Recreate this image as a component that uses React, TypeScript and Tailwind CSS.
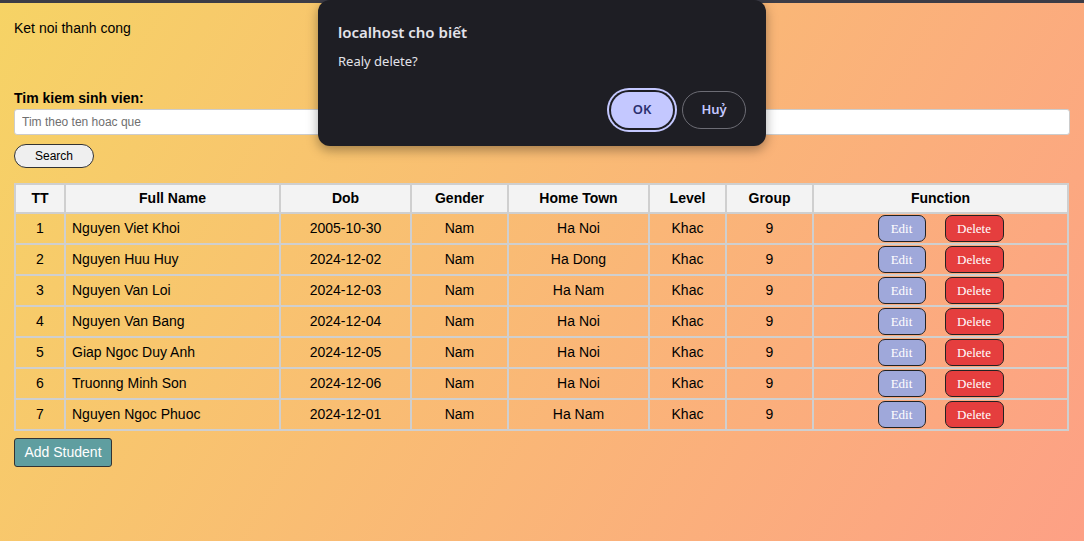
import React from 'react';

type Student = {
  id: number;
  name: string;
  dob: string;
  gender: string;
  town: string;
  level: string;
  group: string;
};

const students: Student[] = [
  { id: 1, name: 'Nguyen Viet Khoi', dob: '2005-10-30', gender: 'Nam', town: 'Ha Noi', level: 'Khac', group: '9' },
  { id: 2, name: 'Nguyen Huu Huy', dob: '2024-12-02', gender: 'Nam', town: 'Ha Dong', level: 'Khac', group: '9' },
  { id: 3, name: 'Nguyen Van Loi', dob: '2024-12-03', gender: 'Nam', town: 'Ha Nam', level: 'Khac', group: '9' },
  { id: 4, name: 'Nguyen Van Bang', dob: '2024-12-04', gender: 'Nam', town: 'Ha Noi', level: 'Khac', group: '9' },
  { id: 5, name: 'Giap Ngoc Duy Anh', dob: '2024-12-05', gender: 'Nam', town: 'Ha Noi', level: 'Khac', group: '9' },
  { id: 6, name: 'Truonng Minh Son', dob: '2024-12-06', gender: 'Nam', town: 'Ha Noi', level: 'Khac', group: '9' },
  { id: 7, name: 'Nguyen Ngoc Phuoc', dob: '2024-12-01', gender: 'Nam', town: 'Ha Nam', level: 'Khac', group: '9' },
];

const th = 'border-2 border-[#cfcfcf] bg-[#f3f3f3] h-[29px] p-0 text-[14px] font-bold text-black';
const td = 'border-2 border-[#cfcfcf] h-[31px] p-0 text-[14px] text-black text-center';

export default function App() {
  return (
    <div className="relative min-h-screen bg-[linear-gradient(120deg,#f6d365_0%,#fda085_100%)] font-['Liberation_Sans',Arial,sans-serif] overflow-hidden">
      {/* thanh toi phia tren */}
      <div className="h-[3px] bg-[#3c3c46]" />

      <div className="px-[14px]">
        <p className="pt-[17px] text-[14px] leading-[16px] text-black">Ket noi thanh cong</p>

        {/* tim kiem */}
        <div className="mt-[54px]">
          <label className="block text-[14px] leading-[16px] font-bold text-black">Tim kiem sinh vien:</label>
          <input
            type="text"
            placeholder="Tim theo ten hoac que"
            className="mt-[3px] block w-full h-[26px] px-[7px] bg-white border border-[#cccccc] rounded-[3px] text-[12px] placeholder:text-[#6f6f6f] outline-none"
          />
          <button className="mt-[9px] w-[80px] h-[24px] rounded-full border border-[#333] bg-[#efefef] text-[12px] text-black">
            Search
          </button>
        </div>

        {/* bang sinh vien */}
        <table className="mt-[15px] w-[1055px] table-fixed border-collapse border-2 border-[#cfcfcf]">
          <colgroup>
            <col className="w-[50px]" />
            <col className="w-[215px]" />
            <col className="w-[131px]" />
            <col className="w-[97px]" />
            <col className="w-[141px]" />
            <col className="w-[77px]" />
            <col className="w-[87px]" />
            <col />
          </colgroup>
          <thead>
            <tr>
              <th className={th}>TT</th>
              <th className={th}>Full Name</th>
              <th className={th}>Dob</th>
              <th className={th}>Gender</th>
              <th className={th}>Home Town</th>
              <th className={th}>Level</th>
              <th className={th}>Group</th>
              <th className={th}>Function</th>
            </tr>
          </thead>
          <tbody>
            {students.map((s) => (
              <tr key={s.id}>
                <td className={td}>{s.id}</td>
                <td className="border-2 border-[#cfcfcf] h-[31px] p-0 pl-[6px] text-[14px] text-black text-left">{s.name}</td>
                <td className={td}>{s.dob}</td>
                <td className={td}>{s.gender}</td>
                <td className={td}>{s.town}</td>
                <td className={td}>{s.level}</td>
                <td className={td}>{s.group}</td>
                <td className={td}>
                  <div className="flex justify-center gap-[19px] font-['Liberation_Serif',serif]">
                    <button className="w-[48px] h-[27px] rounded-[7px] border border-[#222] bg-[#9fa8da] text-[13px] text-white">
                      Edit
                    </button>
                    <button className="w-[59px] h-[27px] rounded-[7px] border border-[#222] bg-[#e53e3e] text-[13px] text-white">
                      Delete
                    </button>
                  </div>
                </td>
              </tr>
            ))}
          </tbody>
        </table>

        <button className="mt-[7px] w-[98px] h-[29px] rounded-[3px] border border-[#333] bg-[#5f9ea0] text-[14px] text-white">
          Add Student
        </button>
      </div>

      {/* hop thoai xac nhan */}
      <div className="absolute left-[318px] top-0 w-[448px] h-[146px] rounded-[12px] bg-[#1e1e24] shadow-[0_4px_12px_rgba(0,0,0,0.35)] px-[20px] font-['Noto_Sans',sans-serif]">
        <h2 className="pt-[21px] text-[15px] leading-[22px] font-semibold text-[#e3e3ea]">localhost cho biết</h2>
        <p className="mt-[9px] text-[13px] leading-[18px] text-[#e3e3ea]">Realy delete?</p>
        <div className="mt-[22px] flex justify-end gap-[9px]">
          <button className="w-[62px] h-[36px] rounded-full bg-[#c4c8ff] text-[13px] font-semibold text-[#2b2f6e] ring-2 ring-[#c4c8ff] ring-offset-2 ring-offset-[#1e1e24] -mr-[3px]">
            OK
          </button>
          <button className="ml-[3px] w-[64px] h-[38px] -mt-[1px] rounded-full border border-[#6c6c74] text-[13px] font-semibold text-[#c4c8ff]">
            Huỷ
          </button>
        </div>
      </div>
    </div>
  );
}
